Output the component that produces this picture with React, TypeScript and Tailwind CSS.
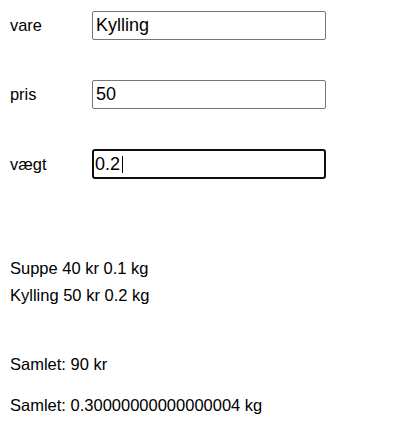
import React from "react";

export default function App() {
  const font = { fontFamily: '"Liberation Sans", Arial, sans-serif' };
  return (
    <div className="min-h-[437px] w-[401px] bg-white pl-[10px] pt-[11px] text-black" style={font}>
      <div className="mb-[40px] flex h-[29px] items-center">
        <label className="w-[82px] text-[16.4px]">vare</label>
        <input
          defaultValue="Kylling"
          className="h-[29px] w-[234px] rounded-[2px] border border-[#767676] bg-white px-[3px] text-[18px] text-black outline-none"
          style={font}
        />
      </div>
      <div className="mb-[40px] flex h-[29px] items-center">
        <label className="w-[82px] text-[16.4px]">pris</label>
        <input
          defaultValue="50"
          className="h-[29px] w-[234px] rounded-[2px] border border-[#767676] bg-white px-[3px] text-[18px] text-black outline-none"
          style={font}
        />
      </div>
      <div className="flex h-[30px] items-center">
        <label className="w-[82px] text-[16.4px]">vægt</label>
        <div className="relative">
          <input
            defaultValue="0.2"
            className="h-[30px] w-[234px] rounded-[3px] border-2 border-[#101010] bg-white px-[1px] text-[18px] text-black outline-none"
            style={font}
          />
          <span className="pointer-events-none absolute left-[30px] top-[7px] h-[17px] w-px bg-black" />
        </div>
      </div>
      <div className="mt-[76px] text-[16.5px] leading-[27px]">
        <div>Suppe 40 kr 0.1 kg</div>
        <div>Kylling 50 kr 0.2 kg</div>
      </div>
      <div className="mt-[42px] text-[16.5px] leading-[27px]">Samlet: 90 kr</div>
      <div className="mt-[14px] text-[16.5px] leading-[27px]">Samlet: 0.30000000000000004 kg</div>
    </div>
  );
}
